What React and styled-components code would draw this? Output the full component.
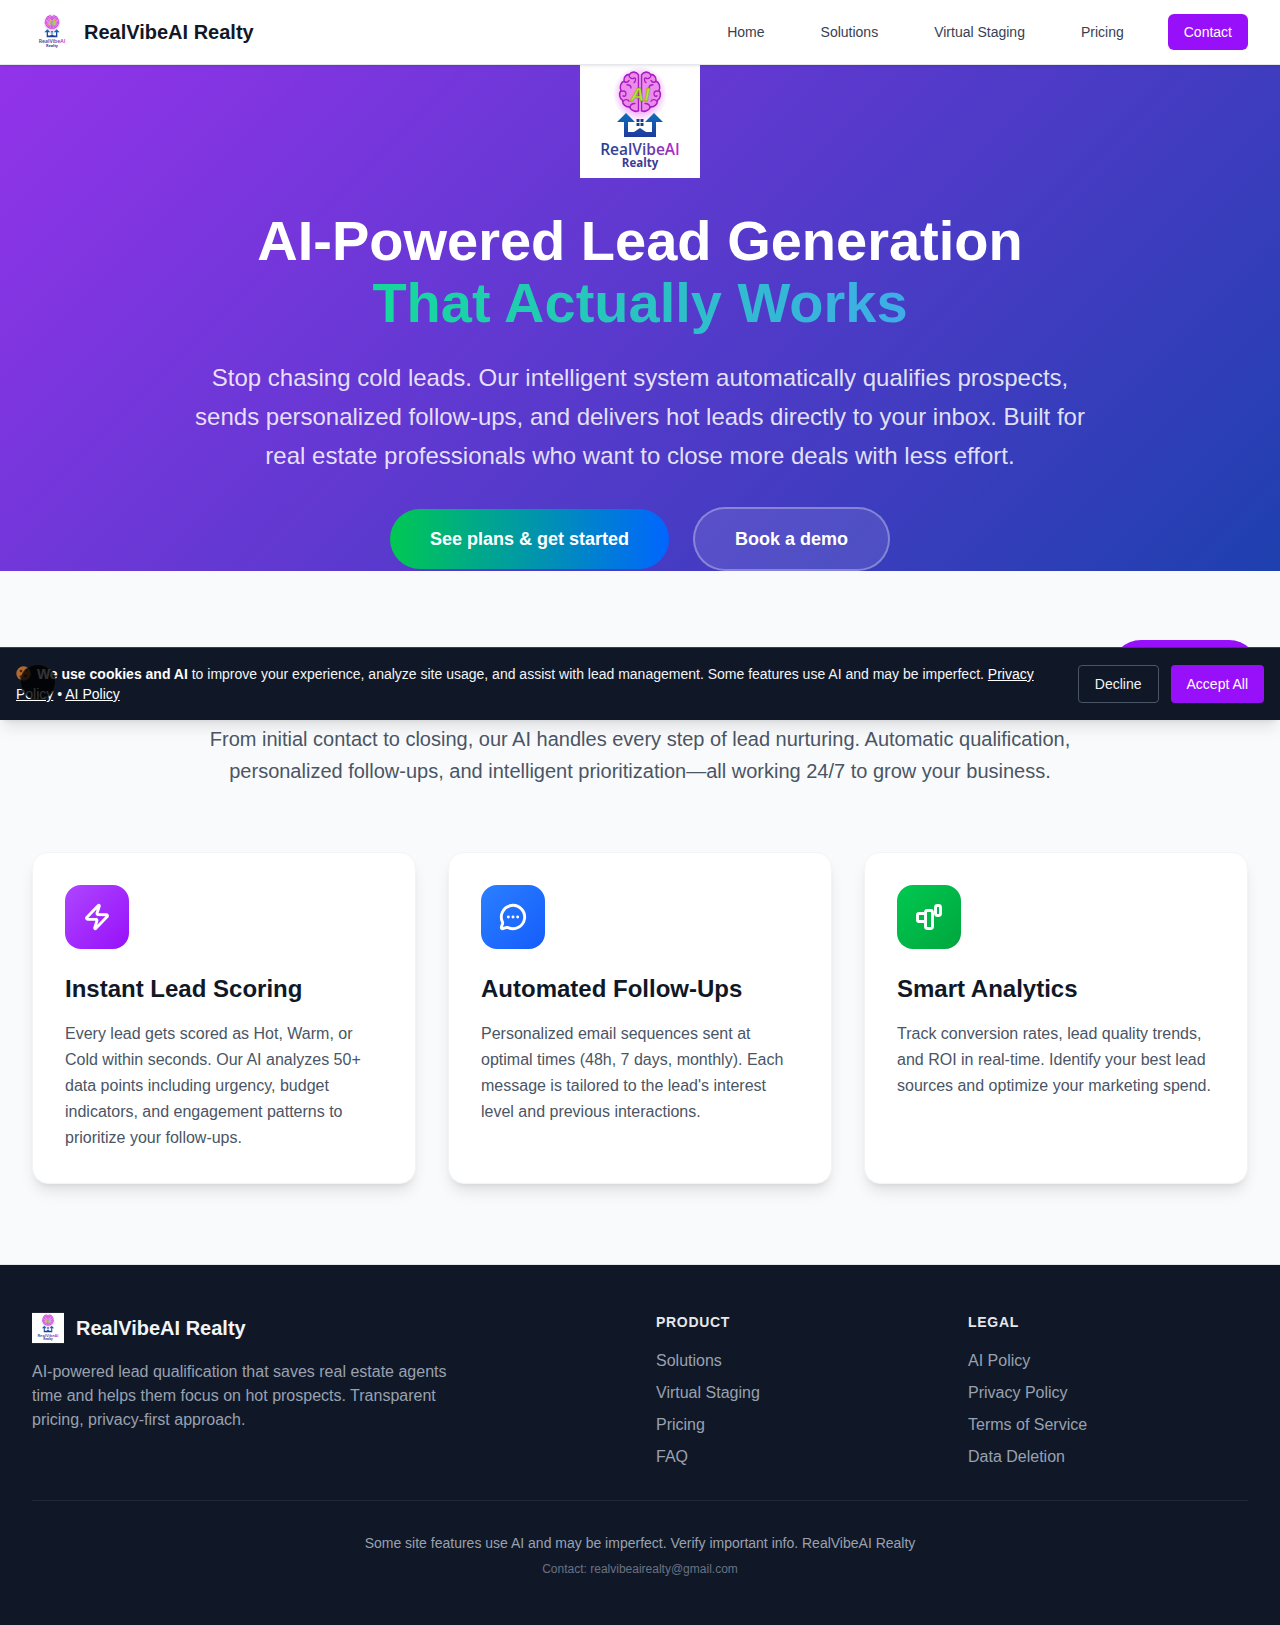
import styled, { createGlobalStyle } from "styled-components";
import { Zap, MessageCircleMore } from "lucide-react";

const GlobalStyle = createGlobalStyle`
  * { box-sizing: border-box; }
  body {
    margin: 0;
    background: #f9fafb;
    font-family: "Liberation Sans", Arial, sans-serif;
    color: #101828;
  }
  a { color: inherit; text-decoration: none; }
`;

const navLinks = ["Home", "Solutions", "Virtual Staging", "Pricing"];

const features = [
  {
    title: "Instant Lead Scoring",
    text: "Every lead gets scored as Hot, Warm, or Cold within seconds. Our AI analyzes 50+ data points including urgency, budget indicators, and engagement patterns to prioritize your follow-ups.",
    from: "#ad46ff",
    to: "#9810fa",
    icon: <Zap size={28} strokeWidth={2.5} />,
  },
  {
    title: "Automated Follow-Ups",
    text: "Personalized email sequences sent at optimal times (48h, 7 days, monthly). Each message is tailored to the lead's interest level and previous interactions.",
    from: "#2b7fff",
    to: "#155dfc",
    icon: <MessageCircleMore size={28} strokeWidth={2.5} />,
  },
  {
    title: "Smart Analytics",
    text: "Track conversion rates, lead quality trends, and ROI in real-time. Identify your best lead sources and optimize your marketing spend.",
    from: "#00c950",
    to: "#00a63e",
    icon: <BarsIcon />,
  },
];

const footerColumns = [
  { title: "PRODUCT", links: ["Solutions", "Virtual Staging", "Pricing", "FAQ"] },
  { title: "LEGAL", links: ["AI Policy", "Privacy Policy", "Terms of Service", "Data Deletion"] },
];

function BarsIcon() {
  return (
    <svg width="32" height="32" viewBox="0 0 32 32" fill="none" stroke="currentColor" strokeWidth="2.9">
      <path d="M11 12.500H6a1.500 1.500 0 0 0-1.500 1.500v5A1.500 1.500 0 0 0 6 20.500h5" />
      <rect x="12.500" y="9.500" width="7" height="18" rx="2" />
      <rect x="22.500" y="4.500" width="5" height="10" rx="2" />
    </svg>
  );
}

function CookieIcon() {
  return (
    <svg width="15" height="15" viewBox="0 0 15 15">
      <circle cx="7.500" cy="7.500" r="7.200" fill="#b5682c" />
      <circle cx="5" cy="5" r="1.300" fill="#4a2410" />
      <circle cx="10" cy="4.500" r="1" fill="#4a2410" />
      <circle cx="9.500" cy="10" r="1.400" fill="#4a2410" />
      <circle cx="4.500" cy="10.500" r="1" fill="#4a2410" />
    </svg>
  );
}

function Logo({ id, width, height }) {
  return (
    <svg width={width} height={height} viewBox="0 0 120 113">
      <defs>
        <radialGradient id={`${id}-glow`}>
          <stop offset="0.6" stopColor="#e879f9" stopOpacity="0.6" />
          <stop offset="1" stopColor="#e879f9" stopOpacity="0" />
        </radialGradient>
        <linearGradient id={`${id}-house`} x1="0" y1="0" x2="0" y2="1">
          <stop offset="0" stopColor="#0f6fb8" />
          <stop offset="1" stopColor="#1e3a9e" />
        </linearGradient>
        <linearGradient id={`${id}-name`} x1="0" y1="0" x2="1" y2="0">
          <stop offset="0" stopColor="#23408f" />
          <stop offset="0.55" stopColor="#4a3fa0" />
          <stop offset="1" stopColor="#c026d3" />
        </linearGradient>
      </defs>
      <rect width="120" height="113" fill="#fff" />
      <ellipse cx="60" cy="29" rx="27" ry="28" fill={`url(#${id}-glow)`} />
      <g transform="scale(1 1.1)">
        <g fill="#ec8cea" stroke="#a81cc0" strokeWidth="1.500" strokeLinejoin="round" strokeLinecap="round">
          <path d="M58.500 9c-2-3-7-3.500-9-.5-4 0-6 3-5.500 6-3.500 1.500-4.500 5.500-3 8.500-2.500 3-1.500 7.500 1.500 9 0 4 3.500 6.500 7 6 1.500 3.500 6 5 9 3.500z" />
          <path d="M61.500 9c2-3 7-3.500 9-.5 4 0 6 3 5.500 6 3.500 1.500 4.500 5.500 3 8.500 2.500 3 1.500 7.500-1.500 9 0 4-3.500 6.500-7 6-1.500 3.500-6 5-9 3.500z" />
        </g>
        <g fill="none" stroke="#a81cc0" strokeWidth="1.300" strokeLinecap="round">
          <path d="M49 9c0 3 3 4 5 3s2 3 0 4M44 15c2 1 4 1 5-1M41 24c3-1 5 0 5 2s-1 3-3 2M43 33c2-2 5-2 6 0M50 39c0-3 2-4 5-4M47 18c2 0 4 1 4 3" />
          <path d="M71 9c0 3-3 4-5 3s-2 3 0 4M76 15c-2 1-4 1-5-1M79 24c-3-1-5 0-5 2s1 3 3 2M77 33c-2-2-5-2-6 0M70 39c0-3-2-4-5-4M73 18c-2 0-4 1-4 3" />
        </g>
      </g>
      <text x="60" y="36" textAnchor="middle" fontFamily="Liberation Sans" fontSize="19" fontWeight="700" fontStyle="italic" fill="#b8e62a" stroke="#5b8a12" strokeWidth="0.400">
        AI
      </text>
      <path
        d="M37 57L46 48 55 57H48V67H54L60 63 66 67H72V57H65L74 48 83 57H76V72H44V57Z"
        fill={`url(#${id}-house)`}
      />
      <g fill="#1e3a8a">
        <rect x="56.500" y="54" width="3" height="3" />
        <rect x="60.500" y="54" width="3" height="3" />
        <rect x="56.500" y="58" width="3" height="3" />
        <rect x="60.500" y="58" width="3" height="3" />
      </g>
      <text x="60" y="90" textAnchor="middle" fontFamily="Open Sans" fontSize="15.500" fontWeight="600" fill={`url(#${id}-name)`}>
        RealVibeAI
      </text>
      <text x="60" y="102" textAnchor="middle" fontFamily="Open Sans" fontSize="11.500" fontWeight="700" fill="#3b3a98">
        Realty
      </text>
    </svg>
  );
}

const App = () => {
  return (
    <Page>
      <GlobalStyle />
      <Header>
        <Brand>
          <Logo id="nav" width={40} height={38} />
          <BrandName>RealVibeAI Realty</BrandName>
        </Brand>
        <Nav>
          {navLinks.map((link) => (
            <NavLink href="#" key={link}>{link}</NavLink>
          ))}
          <ContactButton href="#">Contact</ContactButton>
        </Nav>
      </Header>

      <Hero>
        <HeroLogo>
          <Logo id="hero" width={120} height={113} />
        </HeroLogo>
        <HeroTitle>
          AI-Powered Lead Generation
          <Accent>That Actually Works</Accent>
        </HeroTitle>
        <HeroText>
          Stop chasing cold leads. Our intelligent system automatically qualifies prospects,
          sends personalized follow-ups, and delivers hot leads directly to your inbox. Built for
          real estate professionals who want to close more deals with less effort.
        </HeroText>
        <HeroActions>
          <PrimaryButton href="#">See plans &amp; get started</PrimaryButton>
          <GhostButton href="#">Book a demo</GhostButton>
        </HeroActions>
      </Hero>

      <Features>
        <FeaturesIntro>
          From initial contact to closing, our AI handles every step of lead nurturing. Automatic
          qualification, personalized follow-ups, and intelligent prioritization—all working 24/7
          to grow your business.
        </FeaturesIntro>
        <CardGrid>
          {features.map((item) => (
            <Card key={item.title}>
              <IconTile $from={item.from} $to={item.to}>{item.icon}</IconTile>
              <CardTitle>{item.title}</CardTitle>
              <CardText>{item.text}</CardText>
            </Card>
          ))}
        </CardGrid>
      </Features>

      <Footer>
        <FooterGrid>
          <div>
            <FooterBrand>
              <Logo id="foot" width={32} height={32} />
              <FooterName>RealVibeAI Realty</FooterName>
            </FooterBrand>
            <FooterBlurb>
              AI-powered lead qualification that saves real estate agents time and helps them
              focus on hot prospects. Transparent pricing, privacy-first approach.
            </FooterBlurb>
          </div>
          {footerColumns.map((col) => (
            <div key={col.title}>
              <ColumnTitle>{col.title}</ColumnTitle>
              <ColumnList>
                {col.links.map((link) => (
                  <a href="#" key={link}>{link}</a>
                ))}
              </ColumnList>
            </div>
          ))}
        </FooterGrid>
        <FooterBottom>
          <FooterNote>Some site features use AI and may be imperfect. Verify important info. RealVibeAI Realty</FooterNote>
          <FooterContact>Contact: realvibeairealty@gmail.com</FooterContact>
        </FooterBottom>
      </Footer>

      <FloatingPill />
      <CookieBar>
        <CookieText>
          <CookieIcon /> <strong>We use cookies and AI</strong> to improve your experience, analyze
          site usage, and assist with lead management. Some features use AI and may be imperfect.{" "}
          <u>Privacy Policy</u> • <u>AI Policy</u>
        </CookieText>
        <CookieActions>
          <DeclineButton>Decline</DeclineButton>
          <AcceptButton>Accept All</AcceptButton>
        </CookieActions>
      </CookieBar>
      <CursorDot />
    </Page>
  );
};

export default App;

const Page = styled.div`
  position: relative;
  width: 100%;
  min-height: 1625px;
  overflow: hidden;
`;

const Header = styled.header`
  position: relative;
  z-index: 2;
  height: 65px;
  display: flex;
  align-items: center;
  justify-content: space-between;
  padding: 0 32px;
  background: #fff;
  border-bottom: 1px solid #e5e7eb;
  box-shadow: 0 1px 3px rgba(0, 0, 0, 0.1);
`;

const Brand = styled.div`
  display: flex;
  align-items: center;
  gap: 12px;
`;

const BrandName = styled.span`
  font-size: 20px;
  font-weight: 700;
  color: #101828;
`;

const Nav = styled.nav`
  display: flex;
  align-items: center;
  gap: 32px;
`;

const NavLink = styled.a`
  padding: 0 12px;
  font-size: 14px;
  color: #364153;
`;

const ContactButton = styled.a`
  display: flex;
  align-items: center;
  height: 36px;
  padding: 0 16px;
  border-radius: 6px;
  background: #9810fa;
  color: #fff;
  font-size: 14px;
`;

const Hero = styled.section`
  height: 506px;
  display: flex;
  flex-direction: column;
  align-items: center;
  background: linear-gradient(135deg, #9333ea 0%, #1e40af 100%);
  color: #fff;
`;

const HeroLogo = styled.div`
  display: flex;
  height: 113px;
`;

const HeroTitle = styled.h1`
  margin: 32px 0 0;
  font-size: 56px;
  line-height: 62px;
  font-weight: 700;
  text-align: center;
`;

const Accent = styled.span`
  display: block;
  width: fit-content;
  margin: 0 auto;
  background: linear-gradient(90deg, #14d99a, #3fade8);
  -webkit-background-clip: text;
  background-clip: text;
  color: transparent;
`;

const HeroText = styled.p`
  width: 896px;
  margin: 24px 0 0;
  font-size: 24px;
  line-height: 39px;
  text-align: center;
  color: rgba(255, 255, 255, 0.85);
`;

const HeroActions = styled.div`
  display: flex;
  align-items: center;
  gap: 24px;
  margin-top: 32px;
`;

const PrimaryButton = styled.a`
  display: flex;
  align-items: center;
  height: 60px;
  padding: 0 40px;
  border-radius: 30px;
  background: linear-gradient(90deg, #00c853, #0066ff);
  font-size: 18px;
  font-weight: 700;
  color: #fff;
`;

const GhostButton = styled.a`
  display: flex;
  align-items: center;
  height: 64px;
  padding: 0 40px;
  border-radius: 32px;
  border: 2px solid rgba(255, 255, 255, 0.3);
  background: rgba(255, 255, 255, 0.1);
  font-size: 18px;
  font-weight: 700;
  color: #fff;
`;

const Features = styled.section`
  padding: 152px 32px 80px;
  background: #f9fafb;
`;

const FeaturesIntro = styled.p`
  width: 896px;
  margin: 0 auto 65px;
  font-size: 20px;
  line-height: 32px;
  text-align: center;
  color: #4a5565;
`;

const CardGrid = styled.div`
  display: grid;
  grid-template-columns: repeat(3, 1fr);
  gap: 32px;
`;

const Card = styled.article`
  height: 332px;
  padding: 32px;
  border-radius: 16px;
  background: #fff;
  border: 1px solid #f3f4f6;
  box-shadow: 0 10px 15px -3px rgba(0, 0, 0, 0.1), 0 4px 6px -4px rgba(0, 0, 0, 0.1);
`;

const IconTile = styled.div`
  width: 64px;
  height: 64px;
  display: flex;
  align-items: center;
  justify-content: center;
  border-radius: 16px;
  color: #fff;
  background: linear-gradient(135deg, ${(p) => p.$from}, ${(p) => p.$to});
`;

const CardTitle = styled.h3`
  margin: 24px 0 16px;
  font-size: 24px;
  line-height: 32px;
  font-weight: 700;
  color: #101828;
`;

const CardText = styled.p`
  margin: 0;
  font-size: 16px;
  line-height: 26px;
  color: #4a5565;
`;

const Footer = styled.footer`
  height: 361px;
  padding: 47px 32px 0;
  background: #101828;
  border-top: 1px solid #e5e7eb;
`;

const FooterGrid = styled.div`
  display: grid;
  grid-template-columns: 624px 312px 1fr;
  height: 189px;
  border-bottom: 1px solid #1e2939;
`;

const FooterBrand = styled.div`
  display: flex;
  align-items: center;
  gap: 12px;
  margin-bottom: 16px;
`;

const FooterName = styled.span`
  font-size: 20px;
  font-weight: 700;
  color: #f3f4f6;
`;

const FooterBlurb = styled.p`
  width: 420px;
  margin: 0;
  font-size: 16px;
  line-height: 24px;
  color: #99a1af;
`;

const ColumnTitle = styled.h4`
  margin: 0 0 17px;
  font-size: 14px;
  line-height: 20px;
  font-weight: 700;
  letter-spacing: 0.7px;
  color: #e5e7eb;
`;

const ColumnList = styled.div`
  display: flex;
  flex-direction: column;
  gap: 8px;
  font-size: 16px;
  line-height: 24px;
  color: #99a1af;
`;

const FooterBottom = styled.div`
  padding-top: 32px;
  text-align: center;
`;

const FooterNote = styled.p`
  margin: 0 0 8px;
  font-size: 14px;
  line-height: 20px;
  color: #99a1af;
`;

const FooterContact = styled.p`
  margin: 0;
  font-size: 12px;
  line-height: 16px;
  color: #6a7282;
`;

const FloatingPill = styled.div`
  position: absolute;
  top: 640px;
  left: 1111px;
  width: 148px;
  height: 60px;
  border-radius: 30px;
  background: #9810fa;
`;

const CookieBar = styled.div`
  position: absolute;
  top: 647px;
  left: 0;
  right: 0;
  height: 73px;
  display: flex;
  align-items: center;
  justify-content: space-between;
  gap: 32px;
  padding: 0 16px;
  background: #101828;
  border-top: 1px solid #364153;
  box-shadow: 0 10px 15px -3px rgba(0, 0, 0, 0.1), 0 4px 6px -4px rgba(0, 0, 0, 0.1);
  color: #f3f4f6;
`;

const CookieText = styled.p`
  margin: 0;
  width: 1030px;
  font-size: 14px;
  line-height: 20px;
  svg { vertical-align: -2px; margin-right: 2px; }
  strong { color: #fff; }
  u { color: #fff; }
`;

const CookieActions = styled.div`
  display: flex;
  flex-shrink: 0;
  gap: 12px;
`;

const DeclineButton = styled.button`
  height: 38px;
  padding: 0 16px;
  border: 1px solid #4a5565;
  border-radius: 4px;
  background: transparent;
  color: #f3f4f6;
  font: 14px "Liberation Sans", Arial, sans-serif;
`;

const AcceptButton = styled.button`
  height: 38px;
  padding: 0 16px;
  border: none;
  border-radius: 4px;
  background: #9810fa;
  color: #fff;
  font: 14px "Liberation Sans", Arial, sans-serif;
`;

const CursorDot = styled.div`
  position: absolute;
  top: 664px;
  left: 20px;
  width: 36px;
  height: 36px;
  border-radius: 50%;
  background: rgba(0, 0, 0, 0.8);
  border: 1px solid rgba(255, 255, 255, 0.08);
`;
